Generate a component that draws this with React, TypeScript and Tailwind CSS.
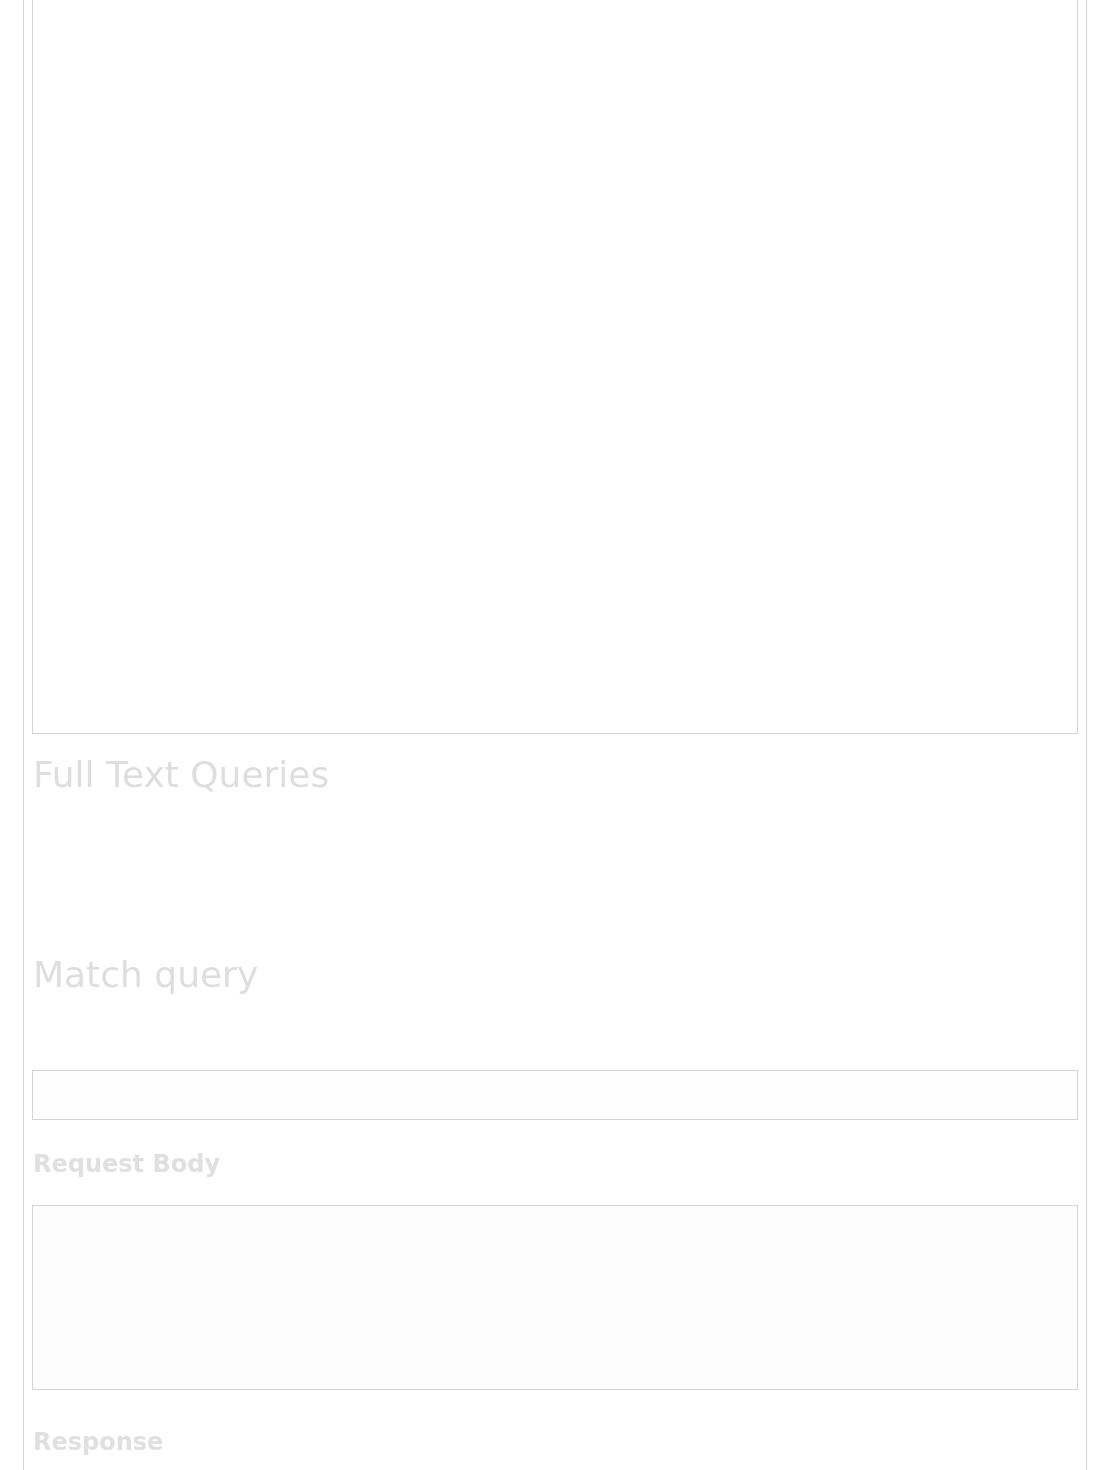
import React from "react";

const font = { fontFamily: '"DejaVu Sans", Verdana, sans-serif' };

export default function App() {
  return (
    <div className="min-h-[1470px] bg-white px-[23px]" style={font}>
      <div className="flex min-h-[1470px] flex-col border-x border-[#d4d4d4] px-[8px]">
        <div className="h-[734px] border-x border-b border-[#d4d4d4] bg-white" />
        <h1 className="mt-[19px] h-[43px] pl-[1px] text-[36px] leading-[43px] text-[#dedede] blur-[0.6px]">
          Full Text Queries
        </h1>
        <h2 className="mt-[157px] h-[43px] pl-[1px] text-[36px] leading-[43px] text-[#dedede] blur-[0.6px]">
          Match query
        </h2>
        <input
          className="mt-[74px] h-[50px] w-full border border-[#d4d4d4] bg-[#fefefe] outline-none"
          readOnly
        />
        <label className="mt-[29px] h-[30px] pl-[1px] text-[24px] font-bold leading-[30px] text-[#e0e0e0] blur-[0.6px]">
          Request Body
        </label>
        <textarea
          className="mt-[26px] h-[185px] w-full resize-none border border-[#d4d4d4] bg-[#fdfdfd] outline-none"
          readOnly
        />
        <label className="mt-[37px] h-[30px] pl-[1px] text-[24px] font-bold leading-[30px] text-[#e0e0e0] blur-[0.6px]">
          Response
        </label>
      </div>
    </div>
  );
}
